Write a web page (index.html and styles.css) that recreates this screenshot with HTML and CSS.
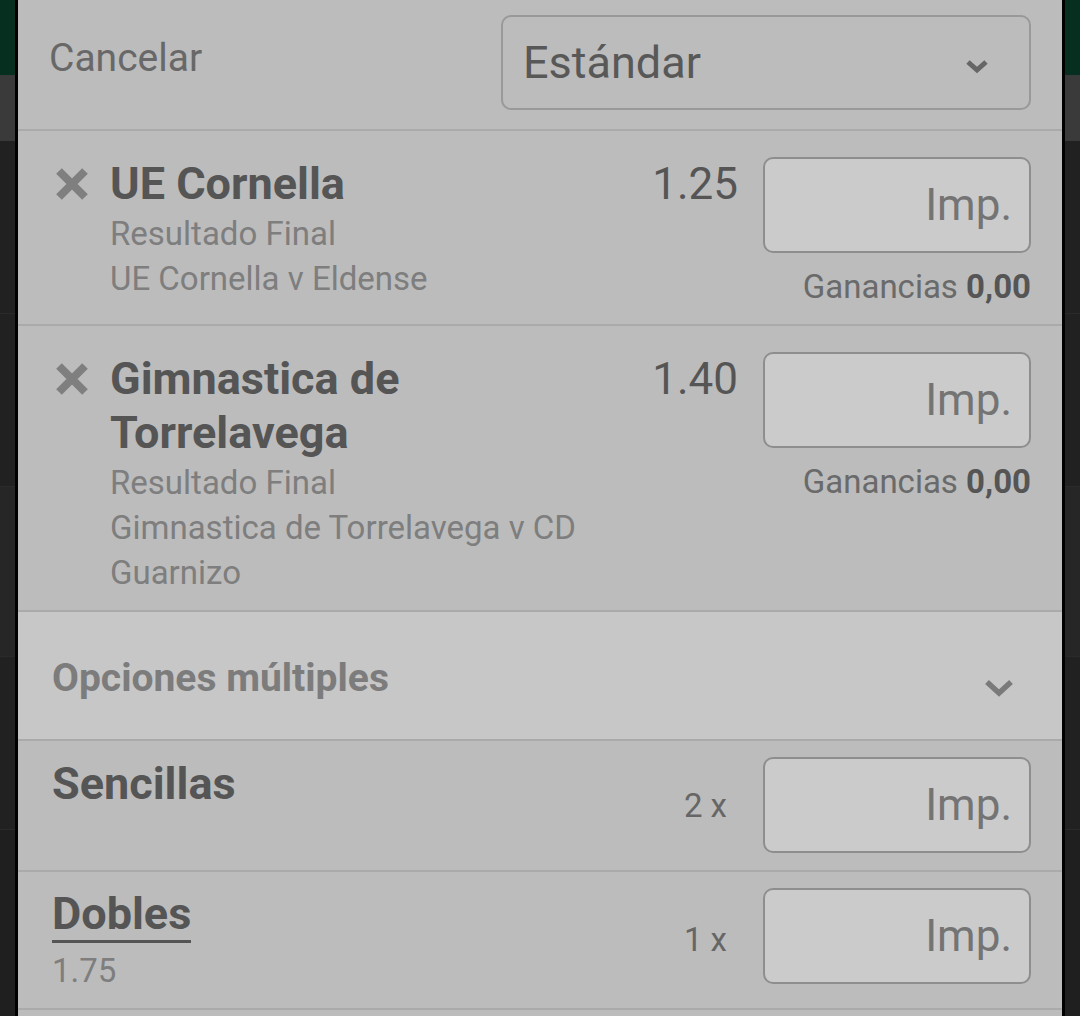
FILE: index.html
```html
<!DOCTYPE html>
<html lang="es">
<head>
    <meta charset="UTF-8">
    <meta name="viewport" content="width=device-width, initial-scale=1.0">
    <title>Boleto de apuestas</title>
    <link rel="stylesheet" href="styles.css">
</head>
<body>
    <!-- Página de fondo (oscurecida) -->
    <div class="backdrop">
        <div class="backdrop-topbar"></div>
        <div class="backdrop-tabs"></div>
        <div class="backdrop-row"></div>
        <div class="backdrop-row"></div>
        <div class="backdrop-row backdrop-row-alt"></div>
        <div class="backdrop-row"></div>
    </div>

    <!-- Boleto -->
    <div class="betslip">
        <div class="slip-header">
            <span class="cancel">Cancelar</span>
            <div class="bet-type">
                <span class="bet-type-value">Estándar</span>
                <svg class="chevron-small" width="24" height="16" viewBox="0 0 24 16">
                    <path d="M3 4 L12 12 L21 4" fill="none" stroke="#666" stroke-width="5"/>
                </svg>
            </div>
        </div>

        <div class="selection">
            <svg class="remove" width="34" height="34" viewBox="0 0 34 34">
                <path d="M4 4 L30 30 M30 4 L4 30" stroke="#7f7f7f" stroke-width="8"/>
            </svg>
            <div class="selection-info">
                <div class="selection-name">UE Cornella</div>
                <div class="selection-meta">Resultado Final</div>
                <div class="selection-meta">UE Cornella v Eldense</div>
            </div>
            <div class="odds">1.25</div>
            <div class="stake">
                <div class="stake-input">Imp.</div>
                <div class="winnings">Ganancias <b>0,00</b></div>
            </div>
        </div>

        <div class="selection">
            <svg class="remove" width="34" height="34" viewBox="0 0 34 34">
                <path d="M4 4 L30 30 M30 4 L4 30" stroke="#7f7f7f" stroke-width="8"/>
            </svg>
            <div class="selection-info">
                <div class="selection-name">Gimnastica de Torrelavega</div>
                <div class="selection-meta">Resultado Final</div>
                <div class="selection-meta">Gimnastica de Torrelavega v CD Guarnizo</div>
            </div>
            <div class="odds">1.40</div>
            <div class="stake">
                <div class="stake-input">Imp.</div>
                <div class="winnings">Ganancias <b>0,00</b></div>
            </div>
        </div>

        <div class="multiples-toggle">
            <span class="multiples-title">Opciones múltiples</span>
            <svg class="chevron" width="30" height="18" viewBox="0 0 30 18">
                <path d="M3 3 L15 14 L27 3" fill="none" stroke="#7a7a7a" stroke-width="5.5"/>
            </svg>
        </div>

        <div class="multiple">
            <div class="multiple-info">
                <div class="multiple-name">Sencillas</div>
            </div>
            <div class="multiple-count">2 x</div>
            <div class="stake-input">Imp.</div>
        </div>

        <div class="multiple">
            <div class="multiple-info">
                <div class="multiple-name underlined">Dobles</div>
                <div class="multiple-odds">1.75</div>
            </div>
            <div class="multiple-count">1 x</div>
            <div class="stake-input">Imp.</div>
        </div>

        <div class="multiple"></div>
    </div>
</body>
</html>
```

FILE: styles.css
```css
body {
    margin: 0;
    height: 1016px;
    overflow: hidden;
    position: relative;
    font-family: Roboto, "Noto Sans", sans-serif;
    background: #1f1f1f;
}

/* Fondo */
.backdrop-topbar {
    height: 75px;
    background: #062f1f;
}

.backdrop-tabs {
    height: 66px;
    background: #3a3a3a;
}

.backdrop-row {
    height: 172px;
    background: #212121;
    border-bottom: 1px solid #2a2a2a;
}

.backdrop-row-alt {
    height: 169px;
    background: #262626;
}

/* Boleto */
.betslip {
    position: absolute;
    top: 0;
    left: 15px;
    width: 1044px;
    height: 1040px;
    background: #bcbcbc;
    border-left: 3px solid #000;
    border-right: 3px solid #000;
}

.slip-header {
    display: flex;
    align-items: center;
    justify-content: space-between;
    height: 131px;
    padding: 0 31px 4px 31px;
    box-sizing: border-box;
    border-bottom: 2px solid #aaa;
}

.cancel {
    font-size: 39px;
    color: #686868;
    margin-bottom: 9px;
}

.bet-type {
    display: flex;
    align-items: center;
    justify-content: space-between;
    width: 530px;
    height: 95px;
    box-sizing: border-box;
    padding: 0 40px 0 20px;
    border: 2px solid #999;
    border-radius: 10px;
}

.bet-type-value {
    font-size: 45px;
    color: #585858;
}

.chevron-small {
    margin-top: 6px;
}

/* Selecciones */
.selection {
    display: flex;
    align-items: flex-start;
    padding: 26px 31px 15px 39px;
    border-bottom: 2px solid #aaa;
}

.remove {
    flex-shrink: 0;
    margin-top: 10px;
    margin-left: -2px;
    margin-right: 21px;
}

.selection-info {
    flex: 1;
    min-width: 0;
}

.selection-name {
    font-size: 45px;
    font-weight: 700;
    line-height: 54px;
    color: #555;
}

.selection-meta {
    font-size: 33px;
    line-height: 45px;
    color: #7e7e7e;
}

.odds {
    width: 120px;
    text-align: right;
    font-size: 44px;
    line-height: 54px;
    color: #555;
    margin-right: 25px;
}

.stake {
    width: 268px;
    flex-shrink: 0;
}

.stake-input {
    width: 268px;
    height: 96px;
    flex-shrink: 0;
    box-sizing: border-box;
    padding-right: 17px;
    display: flex;
    align-items: center;
    justify-content: flex-end;
    background: #cbcbcb;
    border: 2.5px solid #8e8e8e;
    border-radius: 10px;
    font-size: 44px;
    color: #747474;
}

.winnings {
    margin-top: 11px;
    text-align: right;
    font-size: 33px;
    line-height: 45px;
    color: #6a6a6a;
}

.winnings b {
    color: #555;
}

/* Opciones múltiples */
.multiples-toggle {
    display: flex;
    align-items: center;
    justify-content: space-between;
    height: 127px;
    padding: 0 48px 0 34px;
    background: #c7c7c7;
    border-bottom: 2px solid #aaa;
}

.multiples-title {
    margin-top: 4px;
    font-size: 39px;
    font-weight: 700;
    color: #7c7c7c;
}

.chevron {
    margin-top: 24px;
}

.multiple {
    display: flex;
    align-items: flex-start;
    padding: 16px 31px 17px 34px;
    border-bottom: 2px solid #aaa;
}

.multiple-info {
    flex: 1;
}

.multiple-name {
    font-size: 45px;
    font-weight: 700;
    line-height: 54px;
    color: #555;
}

.multiple-name.underlined {
    display: inline-block;
    line-height: 52px;
    border-bottom: 3px solid #555;
}

.multiple-odds {
    margin-top: 7px;
    font-size: 33px;
    line-height: 41px;
    color: #7e7e7e;
}

.multiple-count {
    align-self: center;
    margin-right: 36px;
    font-size: 33px;
    color: #666;
}
```
